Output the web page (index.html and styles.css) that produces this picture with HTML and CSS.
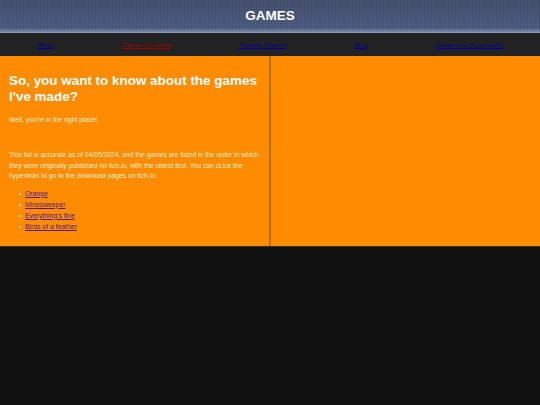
FILE: index.html
```html
<!DOCTYPE html>
<html>
<head>
  <title>Games</title>
  <link rel="stylesheet" href="styles.css">
</head>
<body>
  <header class="banner">
    <h1>GAMES</h1>
  </header>

  <nav class="topnav">
    <a href="#home">Home</a>
    <a href="#games" class="current">Games I've made</a>
    <a href="#youtube">Youtube Channel</a>
    <a href="#blog">Blog</a>
    <a href="#contact">Contact me (if you want)</a>
  </nav>

  <main class="columns">
    <section class="column">
      <h2>So, you want to know about the games I've made?</h2>
      <p class="intro">Well, you're in the right place!</p>
      <p>This list is accurate as of 04/05/2024, and the games are listed in the order in which they were originally published on itch.io, with the oldest first. You can cLick the hyperlinks to go to the download pages on itch.io:</p>
      <ul>
        <li><a href="#orange">Orange</a></li>
        <li><a href="#minesweeper">Minesweeper</a></li>
        <li><a href="#fine">Everything's fine</a></li>
        <li><a href="#birds">Birds of a feather</a></li>
      </ul>
    </section>
    <section class="column"></section>
  </main>
</body>
</html>
```

FILE: styles.css
```css
* {
  box-sizing: border-box;
}

body {
  margin: 0;
  background-color: #111;
  color: #fff;
  font-family: "Liberation Sans", Arial, sans-serif;
  font-size: 6.2px;
}

.banner {
  height: 33px;
  padding-top: 8px;
  text-align: center;
  background-color: #47557a;
  background-image:
    repeating-linear-gradient(90deg, rgba(255, 255, 255, 0.025) 0 1px, rgba(0, 0, 0, 0.03) 1px 3px),
    repeating-linear-gradient(0deg, rgba(255, 255, 255, 0.025) 0 1px, rgba(0, 0, 0, 0.03) 1px 2px),
    linear-gradient(to bottom, #414d6c 0, #4a5a80 85%, #7f8eae 97%, #98a4be 100%);
}

.banner h1 {
  margin: 0;
  font-size: 13.5px;
  line-height: 16px;
  font-weight: bold;
}

.topnav {
  display: flex;
  justify-content: space-around;
  align-items: center;
  height: 23px;
  padding: 0 3px;
  background-color: #222;
}

.topnav a {
  color: #0000a0;
}

.topnav a.current {
  color: #a00000;
}

.columns {
  display: flex;
  background-color: #ff8c00;
  border-bottom: 1px solid #333;
}

.column {
  flex: 1;
  padding: 0 8px 0 9px;
}

.column:first-child {
  flex: 0 0 271px;
  border-right: 2px solid #b5701a;
}

.column h2 {
  margin: 17px 0 0;
  font-size: 13.45px;
  line-height: 16px;
  font-weight: bold;
}

.column p {
  margin: 0;
  font-size: 6.75px;
  line-height: 10.5px;
  color: #ffeccc;
}

.column p.intro {
  margin: 10px 0 24.5px;
}

.column ul {
  margin: 6px 0 14px;
  padding-left: 10px;
  font-size: 6.8px;
  line-height: 11px;
  list-style: none;
}

.column li::before {
  content: "";
  display: inline-block;
  width: 2px;
  height: 2px;
  margin-right: 4px;
  border-radius: 50%;
  background-color: #ffeccc;
  vertical-align: middle;
}

.column li a {
  color: #551a8b;
}
```
